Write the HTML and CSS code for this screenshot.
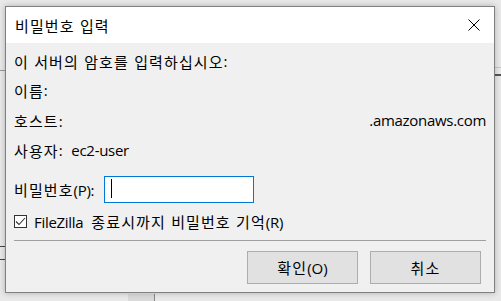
FILE: index.html
```html
<!DOCTYPE html>
<html lang="ko">
<head>
<meta charset="utf-8">
<link rel="stylesheet" href="styles.css">
</head>
<body>
<div class="desktop">
  <div class="bg-lines-left"></div>
  <div class="bg-lines-right"></div>
  <div class="bg-lines-bottom"></div>
  <div class="bg-cols"></div>
  <div class="dialog">
    <div class="titlebar">
      <span class="ko">비밀번호 입력</span>
      <svg class="close" width="12" height="12" viewBox="0 0 12 12"><path d="M0.5 0.5 L11.5 11.5 M11.5 0.5 L0.5 11.5" stroke="#000" stroke-width="1" fill="none"/></svg>
    </div>
    <div class="content">
      <div class="row r1"><span class="ko">이 서버의 암호를 입력하십시오</span>:</div>
      <div class="row"><span class="ko">이름</span>:</div>
      <div class="row spread"><span><span class="ko">호스트</span>:</span><span>.amazonaws.com</span></div>
      <div class="row"><span class="ko">사용자</span>:<span class="val">ec2-user</span></div>
      <div class="row inputrow">
        <label><span class="ko">비밀번호</span>(P):</label>
        <div class="input"><span class="caret"></span></div>
      </div>
      <div class="row checkrow">
        <span class="checkbox"><svg width="11" height="11" viewBox="0 0 11 11"><path d="M1 5.5 L4 8.5 L10 2" stroke="#333" stroke-width="1.1" fill="none"/></svg></span>
        <span>FileZilla<span class="ko gap">종료시까지 비밀번호 기억</span>(R)</span>
      </div>
      <div class="sep"></div>
      <div class="buttons">
        <button class="btn"><span class="ko">확인</span>(O)</button>
        <button class="btn"><span class="ko">취소</span></button>
      </div>
    </div>
  </div>
</div>
</body>
</html>
```
FILE: styles.css
```css
* { box-sizing: border-box; }
html, body { margin: 0; padding: 0; }
body {
  width: 501px;
  height: 301px;
  overflow: hidden;
  background: #e9e9e9;
  font-family: "Open Sans", "Noto Sans CJK KR", sans-serif;
  font-size: 15px;
  letter-spacing: -0.3px;
  color: #000;
}
.ko {
  font-family: "Noto Sans CJK KR", sans-serif;
  font-size: 15px;
  letter-spacing: 1.1px;
}
.ko.gap { margin-left: 8px; }
.desktop {
  position: relative;
  width: 501px;
  height: 301px;
  padding: 6px 0 0 5px;
}
.bg-lines-left {
  position: absolute;
  left: 0; top: 246px;
  width: 5px; height: 14px;
  border-top: 1px solid #444;
  border-bottom: 1px solid #444;
}
.bg-lines-right {
  position: absolute;
  right: 0; top: 67px;
  width: 6px; height: 9px;
  border-top: 1px solid #c8c8c8;
  border-bottom: 2px solid #555;
}
.bg-lines-bottom {
  position: absolute;
  left: 0; top: 70px;
  width: 5px; height: 4px;
  border-top: 1px solid #999;
}
.bg-cols {
  position: absolute;
  left: 128px; top: 294px;
  width: 27px; height: 7px;
  background: #dadada;
  border-right: 1px solid #888;
}
.dialog {
  position: relative;
  width: 490px;
  height: 287px;
  border: 1px solid #808080;
  background: #f0f0f0;
  box-shadow: 0 0 6px rgba(0,0,0,0.25);
  display: flex;
  flex-direction: column;
}
.titlebar {
  height: 36px;
  background: #fff;
  display: flex;
  align-items: center;
  justify-content: space-between;
  padding: 0 14px 0 9px;
}
.content {
  flex: 1;
  padding: 4px 8px 0 8px;
  display: flex;
  flex-direction: column;
}
.row {
  height: 30px;
  display: flex;
  align-items: center;
  white-space: nowrap;
}
.row.r1 { height: 28px; }
.spread { justify-content: space-between; }
.val { margin-left: 9px; }
.inputrow {
  margin-top: 11px;
  height: 27px;
}
.inputrow label { width: 90px; }
.input {
  width: 150px;
  height: 27px;
  background: #fff;
  border: 1px solid #0078d7;
  padding: 2px 0 0 6px;
}
.caret {
  display: block;
  width: 1px;
  height: 19px;
  background: #000;
}
.checkrow {
  margin-top: 5px;
  height: 27px;
}
.checkbox {
  width: 13px;
  height: 13px;
  border: 1px solid #333;
  background: #fff;
  margin-right: 7px;
  display: flex;
  align-items: center;
  justify-content: center;
}
.sep {
  margin-top: 5px;
  height: 1px;
  background: #a0a0a0;
}
.buttons {
  margin-top: 10px;
  display: flex;
  justify-content: flex-end;
  gap: 12px;
  padding-right: 5px;
}
.btn {
  width: 111px;
  height: 33px;
  background: #e1e1e1;
  border: 1px solid #adadad;
  font: inherit;
  color: #000;
  padding: 0;
}
```
